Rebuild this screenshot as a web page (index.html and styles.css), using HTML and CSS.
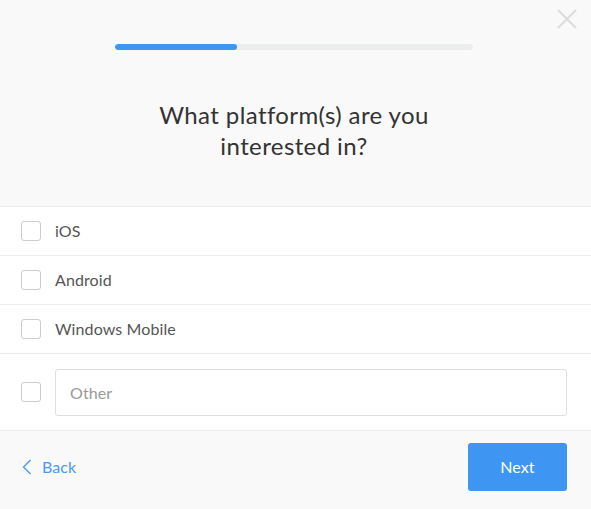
FILE: index.html
```html
<!DOCTYPE html>
<html>
<head>
<meta charset="utf-8">
<link rel="stylesheet" href="styles.css">
</head>
<body>
<div class="modal">
  <header class="head">
    <button class="close" aria-label="Close">
      <svg width="20" height="20" viewBox="0 0 20 20"><path d="M1 1L19 19M19 1L1 19" stroke="#dcdcdc" stroke-width="2" fill="none"/></svg>
    </button>
    <div class="progress"><div class="progress-fill" style="width:34%"></div></div>
    <h1 class="title">What platform(s) are you<br>interested in?</h1>
  </header>
  <ul class="options">
    <li class="option"><span class="box"></span><span class="label">iOS</span></li>
    <li class="option"><span class="box"></span><span class="label">Android</span></li>
    <li class="option"><span class="box"></span><span class="label">Windows Mobile</span></li>
    <li class="option other"><span class="box"></span><input class="other-input" type="text" placeholder="Other"></li>
  </ul>
  <footer class="foot">
    <a class="back" href="#">
      <svg width="10" height="16" viewBox="0 0 10 16"><path d="M8.5 1L1.5 8L8.5 15" stroke="#4a9af5" stroke-width="1.4" fill="none"/></svg>
      <span>Back</span>
    </a>
    <button class="next">Next</button>
  </footer>
</div>
</body>
</html>
```

FILE: styles.css
```css
* { box-sizing: border-box; }
html, body { margin: 0; padding: 0; background: #fff; }
body { font-family: "Lato", "Open Sans", sans-serif; color: #333; }
.modal { width: 591px; height: 509px; overflow: hidden; background: #fff; }
.head {
  position: relative;
  height: 207px;
  background: #f9f9f9;
  border-bottom: 1px solid #e9e9e9;
  padding: 44px 3px 0 0;
  display: flex;
  flex-direction: column;
  align-items: center;
}
.close {
  position: absolute;
  top: 9px;
  right: 14px;
  padding: 0;
  border: 0;
  background: none;
  width: 20px;
  height: 20px;
}
.close svg { display: block; }
.progress {
  width: 358px;
  height: 6px;
  border-radius: 3px;
  background: #eceded;
  overflow: hidden;
}
.progress-fill { height: 100%; background: #3f95f2; border-radius: 3px; }
.title {
  margin: 49px 0 0;
  font-size: 24px;
  line-height: 31px;
  font-weight: 400;
  color: #333;
  text-align: center;
  letter-spacing: 0.4px;
}
.options { list-style: none; margin: 0; padding: 0; }
.option {
  display: flex;
  align-items: center;
  height: 49px;
  padding-left: 21px;
  border-bottom: 1px solid #ececec;
}
.box {
  width: 20px;
  height: 20px;
  border: 1px solid #c9cccc;
  border-radius: 3px;
  flex: none;
  background: #fff;
}
.label {
  margin-left: 14px;
  margin-top: -2px;
  font-size: 16px;
  color: #555;
  letter-spacing: 0.1px;
}
.option.other { height: 77px; padding-right: 24px; }
.other-input {
  margin-left: 14px;
  flex: 1;
  height: 47px;
  border: 1px solid #dedede;
  border-radius: 3px;
  padding: 0 14px;
  font-family: inherit;
  font-size: 16px;
  color: #555;
  outline: none;
}
.other-input::placeholder { color: #999; letter-spacing: 0.1px; }
.foot {
  height: 78px;
  background: #f9f9f9;
  display: flex;
  align-items: flex-start;
  justify-content: space-between;
  padding: 12px 24px 0 22px;
}
.back {
  display: flex;
  align-items: center;
  gap: 10px;
  margin-top: 14px;
  color: #4a9af5;
  text-decoration: none;
  font-size: 16px;
  letter-spacing: 0.1px;
}
.back svg { display: block; }
.next {
  width: 99px;
  height: 48px;
  border: 0;
  border-radius: 3px;
  background: #3f95f2;
  color: #fff;
  font-family: inherit;
  font-size: 16px;
  padding-bottom: 2px;
  letter-spacing: 0.1px;
}
```
